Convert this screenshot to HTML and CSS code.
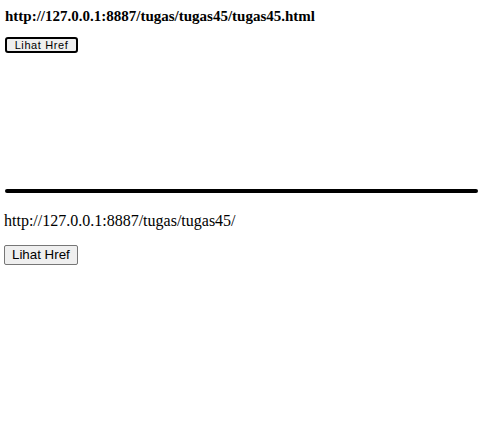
FILE: index.html
```html
<!DOCTYPE html>
<html>
<head>
<meta charset="utf-8">
<link rel="stylesheet" href="styles.css">
</head>
<body>
<section class="preview">
  <p class="preview-url">http://127.0.0.1:8887/tugas/tugas45/tugas45.html</p>
  <button class="preview-btn">Lihat Href</button>
</section>
<hr class="divider">
<section class="live">
  <p class="live-url">http://127.0.0.1:8887/tugas/tugas45/</p>
  <button class="live-btn">Lihat Href</button>
</section>
</body>
</html>
```
FILE: styles.css
```css
html, body {
  margin: 0;
  padding: 0;
  background: #fff;
}
body {
  padding: 0 4px;
  font-family: "Liberation Serif", "Times New Roman", serif;
  color: #000;
}
.preview {
  height: 189px;
  padding-left: 1px;
}
.preview-url {
  margin: 0;
  padding-top: 8px;
  font-size: 15px;
  font-weight: bold;
  line-height: 16px;
}
.preview-btn {
  display: block;
  margin-top: 13px;
  width: 73px;
  height: 16px;
  padding: 0;
  border: 2px solid #000;
  border-radius: 3px;
  background: #efefef;
  font-family: "Liberation Sans", Arial, sans-serif;
  font-size: 11px;
  line-height: 10px;
  letter-spacing: 0.6px;
  color: #000;
}
.divider {
  margin: 0 16px 0 1px;
  height: 0;
  border: 0;
  border-top: 4px solid #000;
  border-radius: 2px;
}
.live-url {
  margin: 0;
  padding-top: 19px;
  font-size: 16px;
  line-height: 18px;
}
.live-btn {
  display: block;
  margin-top: 15px;
  padding: 1px 7px 2px;
  border: 1px solid #767676;
  border-radius: 2px;
  background: #efefef;
  font-family: "Liberation Sans", Arial, sans-serif;
  font-size: 13.333px;
  color: #000;
}
```
